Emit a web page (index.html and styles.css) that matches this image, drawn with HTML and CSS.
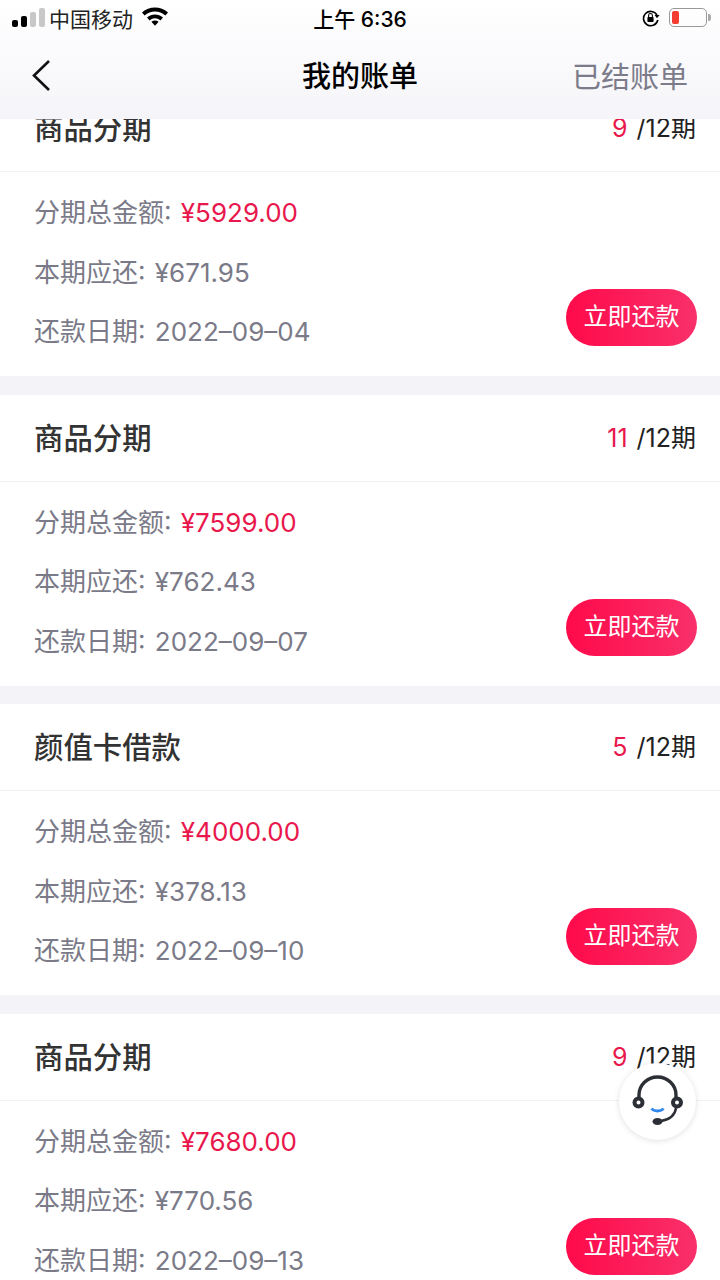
FILE: index.html
```html
<!DOCTYPE html>
<html lang="zh-CN">
<head>
    <meta charset="UTF-8">
    <meta name="viewport" content="width=device-width, initial-scale=1.0">
    <title>我的账单</title>
    <link rel="stylesheet" href="styles.css">
</head>
<body>
<div class="screen">

    <div class="topbar">
        <div class="status">
            <div class="status-left">
                <span class="signal"><i class="on s1"></i><i class="on s2"></i><i class="s3"></i><i class="s4"></i></span>
                <span class="carrier">中国移动</span>
                <svg class="wifi" width="28" height="20" viewBox="0 0 28 20">
                    <path d="M1 6.4C8.2-.2 19.8-.2 27 6.4L24.4 9.4C18.4 4.2 9.6 4.2 3.6 9.4Z" fill="#000"/>
                    <path d="M6 11.6C10.6 7.6 17.4 7.6 22 11.6L19.4 14.4C16 11.6 12 11.6 8.6 14.4Z" fill="#000"/>
                    <path d="M10.4 15.8C12.6 14.2 15.4 14.2 17.6 15.8L14 19.8Z" fill="#000"/>
                </svg>
            </div>
            <div class="clock">上午 6:36</div>
            <div class="status-right">
                <svg class="lock" width="18" height="18" viewBox="0 0 18 18">
                    <path d="M15 6A7.2 7.2 0 1 0 15.8 11" fill="none" stroke="#000" stroke-width="1.6"/>
                    <path d="M12.6 6L17.6 6L15 9.2Z" fill="#000"/>
                    <rect x="5.4" y="8" width="6.2" height="5" rx="0.8" fill="#000"/>
                    <path d="M6.6 8V6.4a1.9 1.9 0 0 1 3.8 0V8" fill="none" stroke="#000" stroke-width="1.1"/>
                </svg>
                <span class="battery"><span class="level"></span></span>
                <span class="battery-tip"></span>
            </div>
        </div>
        <div class="nav">
            <svg class="back" width="20" height="32" viewBox="0 0 20 32">
                <path d="M18 2L3 16.5L18 31" fill="none" stroke="#111" stroke-width="2.6"/>
            </svg>
            <div class="nav-title">我的账单</div>
            <div class="nav-link">已结账单</div>
        </div>
    </div>

    <div class="list">
        <div class="card">
            <div class="card-head">
                <div class="card-title">商品分期</div>
                <div class="term"><span class="term-now">9</span>/12期</div>
            </div>
            <div class="card-body">
                <div class="line">分期总金额: <span class="amount">¥5929.00</span></div>
                <div class="line">本期应还: ¥671.95</div>
                <div class="line">还款日期: 2022–09–04</div>
                <div class="pay-btn">立即还款</div>
            </div>
        </div>
        <div class="card">
            <div class="card-head">
                <div class="card-title">商品分期</div>
                <div class="term"><span class="term-now">11</span>/12期</div>
            </div>
            <div class="card-body">
                <div class="line">分期总金额: <span class="amount">¥7599.00</span></div>
                <div class="line">本期应还: ¥762.43</div>
                <div class="line">还款日期: 2022–09–07</div>
                <div class="pay-btn">立即还款</div>
            </div>
        </div>
        <div class="card">
            <div class="card-head">
                <div class="card-title">颜值卡借款</div>
                <div class="term"><span class="term-now">5</span>/12期</div>
            </div>
            <div class="card-body">
                <div class="line">分期总金额: <span class="amount">¥4000.00</span></div>
                <div class="line">本期应还: ¥378.13</div>
                <div class="line">还款日期: 2022–09–10</div>
                <div class="pay-btn">立即还款</div>
            </div>
        </div>
        <div class="card">
            <div class="card-head">
                <div class="card-title">商品分期</div>
                <div class="term"><span class="term-now">9</span>/12期</div>
            </div>
            <div class="card-body">
                <div class="line">分期总金额: <span class="amount">¥7680.00</span></div>
                <div class="line">本期应还: ¥770.56</div>
                <div class="line">还款日期: 2022–09–13</div>
                <div class="pay-btn">立即还款</div>
            </div>
        </div>
    </div>

    <div class="service">
        <svg width="54" height="54" viewBox="0 0 54 54">
            <path d="M8 24V20a18.5 18 0 0 1 37 0V24" fill="none" stroke="#2d2f36" stroke-width="3.4"/>
            <circle cx="7.5" cy="27.5" r="4" fill="#fff" stroke="#2d2f36" stroke-width="4"/>
            <circle cx="46" cy="27.5" r="4" fill="#fff" stroke="#2d2f36" stroke-width="4"/>
            <path d="M45 33C44 40 39 44.5 30 46" fill="none" stroke="#2d2f36" stroke-width="2.4"/>
            <ellipse cx="26.5" cy="46.5" rx="5" ry="3.5" fill="#2d2f36"/>
            <path d="M20.5 33.5C23 36.8 30 36.8 32.5 33.5" fill="none" stroke="#2f86ee" stroke-width="2.8"/>
        </svg>
    </div>

</div>
</body>
</html>
```

FILE: styles.css
```css
* {
    box-sizing: border-box;
}
html, body {
    margin: 0;
    padding: 0;
}
body {
    font-family: Inter, "Noto Sans CJK SC", sans-serif;
    background-color: #f4f4f8;
}
.screen {
    position: relative;
    width: 720px;
    height: 1280px;
    overflow: hidden;
    background-color: #f4f4f8;
}

/* top bar sits over the scrolled list */
.topbar {
    position: absolute;
    top: 0;
    left: 0;
    width: 720px;
    height: 119px;
    z-index: 2;
    background: linear-gradient(#ffffff, #fbfbfd 40%, #f5f5f9);
}
.status {
    height: 37px;
    padding-bottom: 2px;
    display: grid;
    grid-template-columns: 1fr auto 1fr;
    align-items: center;
    color: #000;
}
.status-left {
    display: flex;
    align-items: center;
    padding-left: 12px;
}
.signal {
    display: flex;
    align-items: flex-end;
    gap: 3px;
    height: 19px;
}
.signal i {
    display: block;
    width: 6px;
    border-radius: 2px;
    background-color: #c8c8c8;
}
.signal .on {
    background-color: #000;
}
.s1 { height: 7px; }
.s2 { height: 11px; }
.s3 { height: 15px; }
.s4 { height: 19px; }
.carrier {
    font-size: 21px;
    margin-left: 4px;
    color: #222;
}
.wifi {
    margin-left: 8px;
    margin-top: -3px;
}
.clock {
    font-size: 21px;
    font-weight: 500;
}
.status-right {
    display: flex;
    align-items: center;
    justify-content: flex-end;
    padding-right: 9px;
}
.lock {
    margin-right: 9px;
}
.battery {
    display: block;
    width: 38px;
    height: 19px;
    border: 1.5px solid #999;
    border-radius: 5px;
    padding: 2px;
}
.level {
    display: block;
    width: 7px;
    height: 100%;
    background-color: #f63b30;
    border-radius: 2px;
}
.battery-tip {
    display: block;
    width: 3px;
    height: 7px;
    margin-left: 1px;
    background-color: #aaa;
    border-radius: 0 2px 2px 0;
}

.nav {
    position: relative;
    height: 82px;
    display: flex;
    align-items: center;
    justify-content: space-between;
    padding: 0 32px 7px 31px;
}
.nav-title {
    position: absolute;
    left: 0;
    right: 0;
    top: 20px;
    line-height: 40px;
    text-align: center;
    font-size: 29px;
    font-weight: 500;
    color: #000;
}
.nav-link {
    font-size: 29px;
    color: #7b7b8a;
}

/* first card is scrolled partly under the top bar */
.list {
    padding-top: 85px;
    display: flex;
    flex-direction: column;
    gap: 18.5px;
}
.card {
    background-color: #fff;
    height: 291px;
    flex: none;
}
.card-head {
    height: 87px;
    padding: 0 24px 4px 34px;
    display: flex;
    align-items: center;
    justify-content: space-between;
    border-bottom: 1px solid #f3f3f6;
}
.card-title {
    font-size: 29.4px;
    font-weight: 500;
    color: #333;
}
.term {
    font-size: 25px;
    color: #222;
}
.term-now {
    color: #e8174c;
    margin-right: 9px;
}
.card-body {
    position: relative;
    padding: 11px 34px 0;
}
.line {
    height: 59.5px;
    line-height: 59.5px;
    font-size: 26px;
    word-spacing: 2px;
    color: #7a7a88;
}
.amount {
    color: #e8174c;
}
.pay-btn {
    position: absolute;
    right: 23px;
    top: 117px;
    width: 131px;
    height: 57px;
    line-height: 56px;
    text-align: center;
    border-radius: 29px;
    font-size: 24px;
    color: #fff;
    background: linear-gradient(90deg, #ff0a4a, #f9306a);
}

.service {
    position: absolute;
    left: 619px;
    top: 1063px;
    width: 77px;
    height: 77px;
    border-radius: 50%;
    background-color: #fff;
    box-shadow: 0 1px 6px rgba(0, 0, 0, 0.12);
    display: flex;
    align-items: center;
    justify-content: center;
    z-index: 1;
}
```
